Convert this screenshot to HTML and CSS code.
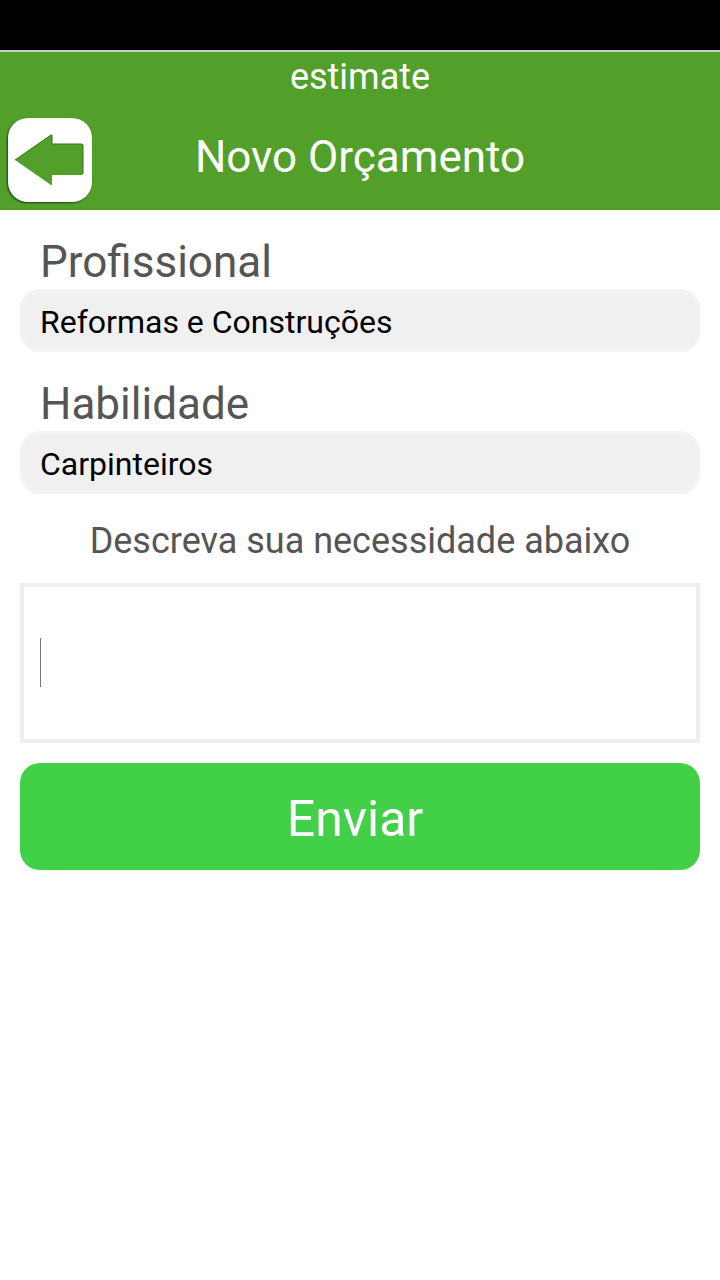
FILE: index.html
```html
<!DOCTYPE html>
<html lang="pt-BR">
<head>
  <meta charset="UTF-8" />
  <meta name="viewport" content="width=device-width, initial-scale=1.0" />
  <title>Novo Orçamento</title>
  <link rel="stylesheet" href="styles.css">
</head>
<body>
  <div class="status-bar"></div>

  <header class="header">
    <div class="app-name">estimate</div>
    <div class="title-row">
      <button type="button" class="back-btn" aria-label="Voltar">
        <svg viewBox="0 0 84 84" aria-hidden="true">
          <path d="M7 42 L43 17 L44 17 V26 H74 L75 27 V56 L74 57 H44 V67 L43 67 Z" fill="#52a029" />
          <path d="M7 42 L43 17 L44 17 V26 H74 L75 27 V56" fill="none" stroke="#39701d" stroke-width="1" />
        </svg>
      </button>
      <h1>Novo Orçamento</h1>
    </div>
  </header>

  <form class="quote-form">
    <label for="profissional">Profissional</label>
    <select id="profissional" name="profissional">
      <option>Reformas e Construções</option>
    </select>

    <label for="habilidade">Habilidade</label>
    <select id="habilidade" name="habilidade">
      <option>Carpinteiros</option>
    </select>

    <label for="descricao" class="description-label">Descreva sua necessidade abaixo</label>
    <div class="description-box">
      <textarea id="descricao" name="descricao" rows="1"></textarea>
      <span class="cursor"></span>
    </div>

    <button type="submit" class="submit-button">Enviar</button>
  </form>
</body>
</html>
```
FILE: styles.css
```css
* {
  box-sizing: border-box;
}

body {
  margin: 0;
  font-family: Roboto, sans-serif;
  background-color: #fff;
}

.status-bar {
  height: 50px;
  background-color: #000;
}

.header {
  border-top: 2px solid #ccc;
  background-color: #52a029;
  color: #fff;
}

.app-name {
  font-size: 36px;
  line-height: 50px;
  text-align: center;
}

.title-row {
  display: grid;
  grid-template-columns: 84px 1fr 84px;
  align-items: center;
  padding: 16px 8px 8px;
}

.back-btn {
  width: 84px;
  height: 84px;
  padding: 0;
  border: none;
  border-radius: 20px;
  background-color: #fff;
  box-shadow: -1px 1px 2px rgba(0, 0, 0, 0.6);
  cursor: pointer;
}

.back-btn svg {
  display: block;
}

h1 {
  margin: 0;
  padding-bottom: 6px;
  font-size: 44px;
  font-weight: normal;
  line-height: 52px;
  text-align: center;
}

.quote-form {
  display: flex;
  flex-direction: column;
  padding: 26px 20px;
}

label {
  padding: 0 20px;
  font-size: 44px;
  line-height: 53px;
  color: #555;
}

select {
  width: 100%;
  height: 63px;
  margin-bottom: 26px;
  padding: 2px 16px 0;
  border: 4px solid #f3f3f3;
  border-radius: 20px;
  background-color: #f0f0f0;
  font-family: inherit;
  font-size: 32px;
  color: #000;
  appearance: none;
}

.description-label {
  font-size: 36px;
  line-height: 43px;
  text-align: center;
}

.description-box {
  position: relative;
  margin: 20px 0;
}

textarea {
  display: block;
  width: 100%;
  height: 160px;
  padding: 50px 16px;
  border: 4px solid #eee;
  outline: none;
  resize: none;
  font-family: inherit;
  font-size: 36px;
}

/* text caret */
.cursor {
  position: absolute;
  top: 55px;
  left: 20px;
  width: 1px;
  height: 49px;
  background-color: #777;
}

.submit-button {
  height: 107px;
  padding: 4px 10px 0 0;
  border: none;
  border-radius: 20px;
  background-color: #41d047;
  color: #fff;
  font-family: inherit;
  font-size: 50px;
  cursor: pointer;
}
```
